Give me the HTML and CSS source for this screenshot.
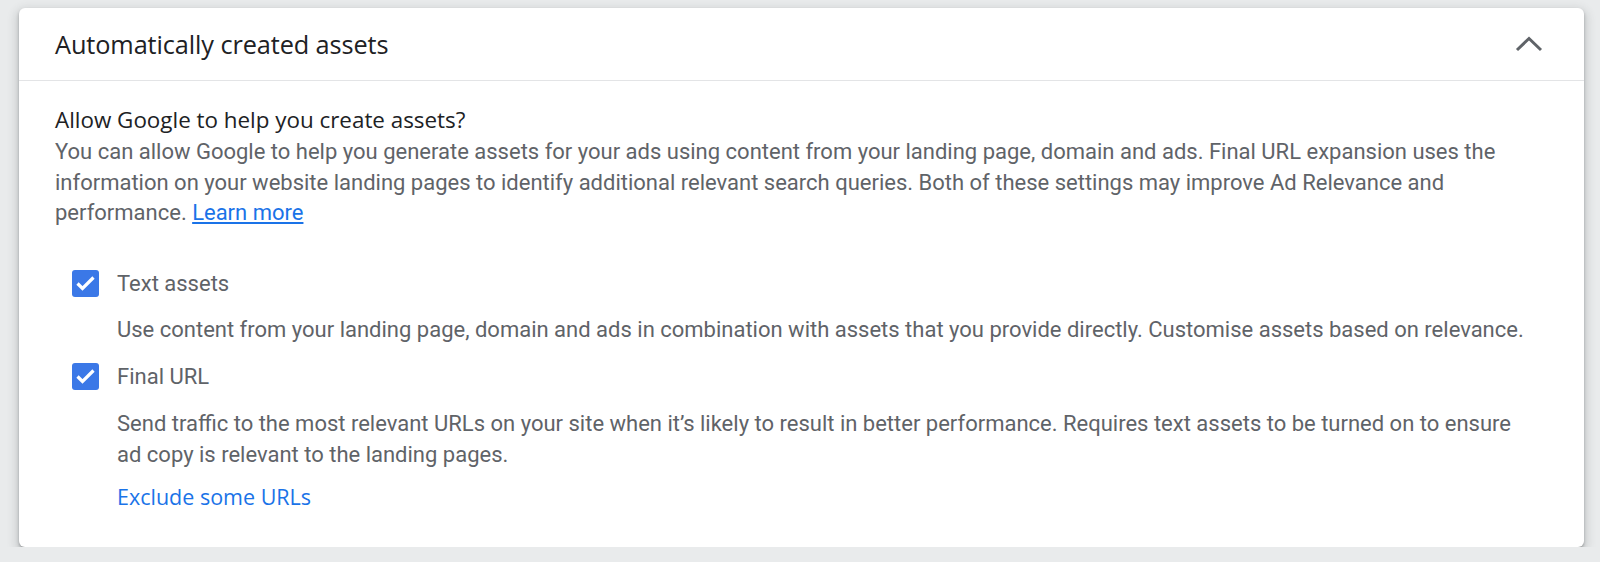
FILE: index.html
```html
<!DOCTYPE html>
<html lang="en">
<head>
<meta charset="utf-8">
<title>Automatically created assets</title>
<link rel="stylesheet" href="styles.css">
</head>
<body>
<section class="card">
  <header class="card-header">
    <h2 class="card-title">Automatically created assets</h2>
    <svg class="chevron" width="28" height="16" viewBox="0 0 28 16" aria-hidden="true">
      <path d="M2 14 L14 2.5 L26 14" fill="none" stroke="#5f6368" stroke-width="3"/>
    </svg>
  </header>
  <div class="card-body">
    <h3 class="question">Allow Google to help you create assets?</h3>
    <p class="intro">You can allow Google to help you generate assets for your ads using content from your landing page, domain and ads. Final URL expansion uses the information on your website landing pages to identify additional relevant search queries. Both of these settings may improve Ad Relevance and performance. <a class="link" href="#">Learn more</a></p>

    <div class="option">
      <div class="option-row">
        <span class="checkbox">
          <svg width="27" height="27" viewBox="0 0 27 27" aria-hidden="true">
            <path d="M5.5 13.5 L10.5 18.5 L21.5 7.5" fill="none" stroke="#fff" stroke-width="3.2"/>
          </svg>
        </span>
        <span class="option-label">Text assets</span>
      </div>
      <p class="option-desc">Use content from your landing page, domain and ads in combination with assets that you provide directly. Customise assets based on relevance.</p>
    </div>

    <div class="option">
      <div class="option-row">
        <span class="checkbox">
          <svg width="27" height="27" viewBox="0 0 27 27" aria-hidden="true">
            <path d="M5.5 13.5 L10.5 18.5 L21.5 7.5" fill="none" stroke="#fff" stroke-width="3.2"/>
          </svg>
        </span>
        <span class="option-label">Final URL</span>
      </div>
      <p class="option-desc option-desc-spaced">Send traffic to the most relevant URLs on your site when it’s likely to result in better performance. Requires text assets to be turned on to ensure ad copy is relevant to the landing pages.</p>
      <a class="action-link" href="#">Exclude some URLs</a>
    </div>
  </div>
</section>
</body>
</html>
```

FILE: styles.css
```css
html, body {
  margin: 0;
  padding: 0;
}
body {
  background: #e9ebec;
  font-family: Roboto, "Liberation Sans", sans-serif;
  padding: 8px 16px 0 19px;
}
.card {
  background: #fff;
  border-radius: 6px;
  box-shadow: 0 2px 3px rgba(60,64,67,0.35), 0 4px 10px 3px rgba(60,64,67,0.18);
  height: 539px;
  box-sizing: border-box;
}
.card-header {
  height: 73px;
  box-sizing: border-box;
  border-bottom: 1px solid #e3e4e6;
  display: flex;
  align-items: center;
  justify-content: space-between;
  padding: 0 41px 0 36px;
}
.card-title {
  margin: 0;
  font-family: "Open Sans", Roboto, sans-serif;
  font-weight: 400;
  font-size: 25.3px;
  letter-spacing: -0.1px;
  color: #202124;
}
.chevron {
  display: block;
}
.card-body {
  padding: 24px 36px 0 36px;
}
.question {
  margin: 0;
  font-family: "Open Sans", Roboto, sans-serif;
  font-weight: 500;
  font-size: 22.4px;
  line-height: 30px;
  color: #202124;
}
.intro {
  margin: 2px 0 0 0;
  font-size: 22px;
  line-height: 30.5px;
  color: #5f6368;
}
.link {
  color: #1a73e8;
  text-decoration: underline;
}
.option {
  padding-left: 17px;
  margin-top: 16px;
}
.intro + .option {
  margin-top: 40px;
}
.option-row {
  display: flex;
  align-items: center;
  height: 30px;
  gap: 18px;
}
.checkbox {
  width: 27px;
  height: 27px;
  border-radius: 3px;
  background: #3b78e7;
  display: block;
}
.checkbox svg {
  display: block;
}
.option-label {
  font-size: 22px;
  color: #5f6368;
}
.option-desc {
  margin: 16px 14px 0 45px;
  font-size: 22px;
  line-height: 30.5px;
  color: #5f6368;
}
.option-desc-spaced {
  margin-top: 18px;
}
.action-link {
  display: block;
  margin: 12px 0 0 45px;
  font-family: "Open Sans", Roboto, sans-serif;
  font-weight: 500;
  font-size: 21.5px;
  line-height: 30px;
  color: #1a73e8;
  text-decoration: none;
}
```
